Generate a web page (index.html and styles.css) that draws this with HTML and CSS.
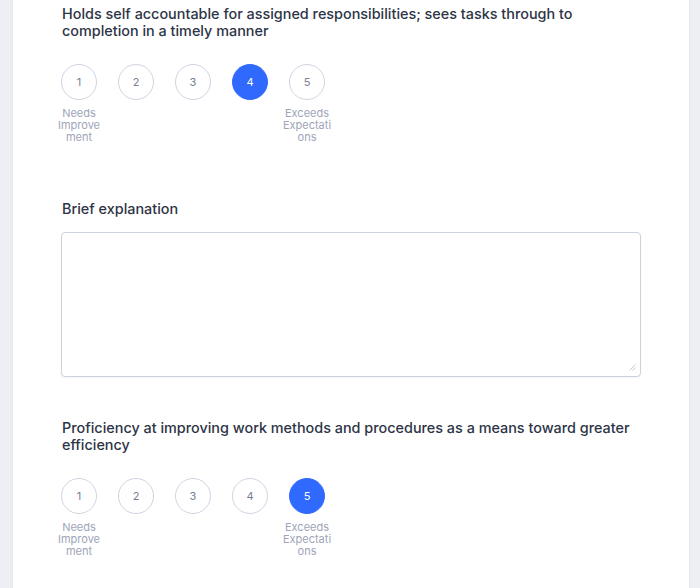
FILE: index.html
```html
<!DOCTYPE html>
<html>
<head>
<meta charset="utf-8">
<link rel="stylesheet" href="styles.css">
</head>
<body>
<div class="page">
  <div class="card">
    <section class="question">
      <h2 class="q-title">Holds self accountable for assigned responsibilities; sees tasks through to completion in a timely manner</h2>
      <div class="scale">
        <div class="opt"><div class="circle">1</div><div class="lbl">Needs Improvement</div></div>
        <div class="opt"><div class="circle">2</div></div>
        <div class="opt"><div class="circle">3</div></div>
        <div class="opt"><div class="circle selected">4</div></div>
        <div class="opt"><div class="circle">5</div><div class="lbl">Exceeds Expectations</div></div>
      </div>
    </section>
    <section class="explain">
      <h2 class="q-title">Brief explanation</h2>
      <div class="box-wrap">
        <textarea class="box"></textarea>
        <svg class="grip" width="8" height="8" viewBox="0 0 8 8"><path d="M7.5 1.5 L1.5 7.5 M7.5 4.5 L4.5 7.5" stroke="#c3c8d4" stroke-width="1" fill="none"/></svg>
      </div>
    </section>
    <section class="question second">
      <h2 class="q-title">Proficiency at improving work methods and procedures as a means toward greater efficiency</h2>
      <div class="scale">
        <div class="opt"><div class="circle">1</div><div class="lbl">Needs Improvement</div></div>
        <div class="opt"><div class="circle">2</div></div>
        <div class="opt"><div class="circle">3</div></div>
        <div class="opt"><div class="circle">4</div></div>
        <div class="opt"><div class="circle selected">5</div><div class="lbl">Exceeds Expectations</div></div>
      </div>
    </section>
  </div>
</div>
</body>
</html>
```
FILE: styles.css
```css
html, body {
  margin: 0;
  padding: 0;
  background: #edeff4;
  font-family: Inter, "Noto Sans", sans-serif;
}
.page {
  padding-left: 13px;
  padding-right: 11px;
  height: 588px;
  overflow: hidden;
}
.card {
  background: #fff;
  box-shadow: 0 0 3px rgba(0,0,0,0.08);
  padding: 5px 48px 40px 49px;
  min-height: 600px;
}
.q-title {
  margin: 0;
  font-size: 14.4px;
  line-height: 17px;
  font-weight: 500;
  color: #2d3446;
}
.scale {
  display: flex;
  gap: 21px;
  margin-top: 25px;
  margin-left: -1px;
}
.opt {
  width: 36px;
  display: flex;
  flex-direction: column;
  align-items: center;
}
.circle {
  width: 36px;
  height: 36px;
  box-sizing: border-box;
  border: 1.5px solid #cfd4e2;
  border-radius: 50%;
  display: flex;
  align-items: center;
  justify-content: center;
  font-size: 11px;
  color: #767e94;
}
.circle.selected {
  background: #3069fe;
  border-color: #3069fe;
  color: #fff;
}
.lbl {
  width: 50px;
  margin: 7px -7px 0;
  text-align: center;
  font-size: 11px;
  line-height: 12px;
  color: #9ea5b8;
  overflow-wrap: anywhere;
}
.explain {
  margin-top: 57px;
}
.box-wrap {
  position: relative;
  margin: 15px 0 0 -1px;
}
.box {
  display: block;
  width: 100%;
  height: 145px;
  box-sizing: border-box;
  border: 1px solid #cdd2df;
  border-radius: 4px;
  box-shadow: 0 1px 2px rgba(0,0,0,0.05);
  background: #fff;
  resize: none;
  outline: none;
}
.grip {
  position: absolute;
  right: 5px;
  bottom: 6px;
}
.second {
  margin-top: 42px;
}
```
